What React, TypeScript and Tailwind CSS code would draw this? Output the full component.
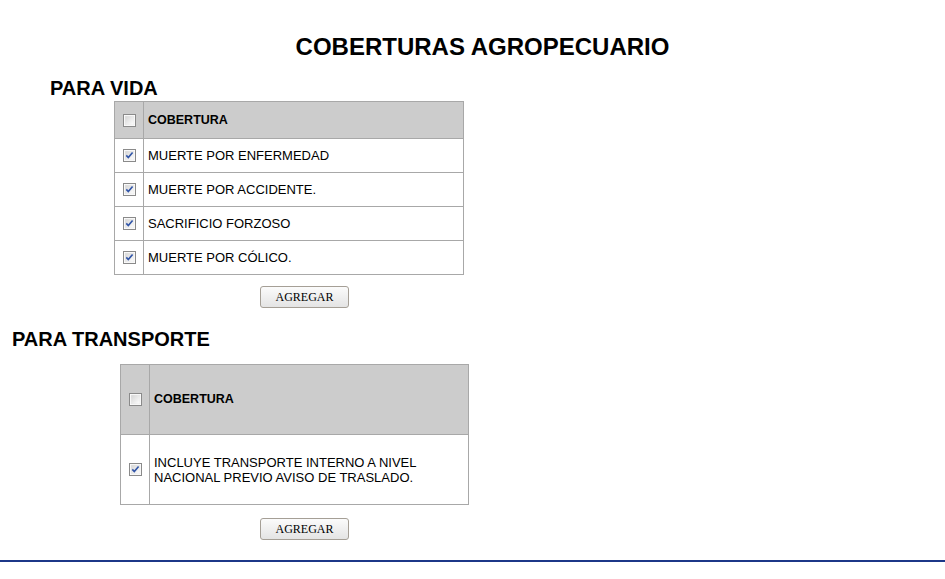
import React from "react";

function Box({ checked }: { checked?: boolean }) {
  return (
    <svg width="13" height="13" viewBox="0 0 13 13" className="block mx-auto">
      <defs>
        <linearGradient id="cbg" x1="0" y1="0" x2="1" y2="1">
          <stop offset="0" stopColor="#d4d4d4" />
          <stop offset="1" stopColor="#ffffff" />
        </linearGradient>
      </defs>
      <rect x="0.5" y="0.5" width="12" height="12" fill="#ffffff" stroke="#8a8a8a" />
      <rect x="2" y="2" width="9" height="9" fill="url(#cbg)" stroke="#e6e6e6" strokeWidth="0.6" />
      {checked && (
        <path d="M3.3 6.4 L5.3 8.6 L9.6 3.4" fill="none" stroke="#3155a8" strokeWidth="1.6" />
      )}
    </svg>
  );
}

function Button() {
  return (
    <button
      className="w-[89px] h-[22px] rounded-[3px] border border-[#a59f96] bg-gradient-to-b from-[#fbfbfb] to-[#e4e4e4] text-[12px] text-[#000] leading-none"
      style={{ fontFamily: '"Liberation Serif", "Times New Roman", serif' }}
    >
      AGREGAR
    </button>
  );
}

function CovTable({
  rows,
  headH,
  rowH,
  width,
}: {
  rows: string[];
  headH: number;
  rowH: number;
  width: number;
}) {
  return (
    <table className="border-collapse text-[13px] text-black" style={{ width }}>
      <tbody>
        <tr className="bg-[#cccccc]" style={{ height: headH }}>
          <td className="w-[29px] border border-[#a8a8a8] p-0 align-middle">
            <Box />
          </td>
          <td className="border border-[#a8a8a8] pl-[4px] align-middle font-bold text-[12.5px]">COBERTURA</td>
        </tr>
        {rows.map((r) => (
          <tr key={r} style={{ height: rowH }}>
            <td className="w-[29px] border border-[#a8a8a8] p-0 align-middle">
              <Box checked />
            </td>
            <td className="border border-[#a8a8a8] pl-[4px] pr-[4px] align-middle leading-[15px]">{r}</td>
          </tr>
        ))}
      </tbody>
    </table>
  );
}

export default function App() {
  return (
    <div
      className="w-[945px] h-[579px] bg-white text-black overflow-hidden"
      style={{ fontFamily: '"Liberation Sans", Arial, sans-serif' }}
    >
      <h1 className="pt-[35px] pl-[20px] text-center text-[24px] font-bold leading-[24px]">COBERTURAS AGROPECUARIO</h1>
      <h2 className="mt-[19px] pl-[50px] text-[20px] font-bold leading-[20px]">PARA VIDA</h2>
      <div className="mt-[3px] pl-[114px]">
        <CovTable
          width={350}
          headH={37}
          rowH={34}
          rows={["MUERTE POR ENFERMEDAD", "MUERTE POR ACCIDENTE.", "SACRIFICIO FORZOSO", "MUERTE POR CÓLICO."]}
        />
      </div>
      <div className="mt-[9px] pl-[260px] h-[22px]">
        <Button />
      </div>
      <h2 className="mt-[23px] pl-[12px] text-[20px] font-bold leading-[20px]">PARA TRANSPORTE</h2>
      <div className="mt-[15px] pl-[120px]">
        <CovTable
          width={349}
          headH={70}
          rowH={70}
          rows={["INCLUYE TRANSPORTE INTERNO A NIVEL NACIONAL PREVIO AVISO DE TRASLADO."]}
        />
      </div>
      <div className="mt-[11px] pl-[260px] h-[23px]">
        <Button />
      </div>
      <div className="mt-[21px] h-[2px] bg-[#1c3788]" />
    </div>
  );
}
